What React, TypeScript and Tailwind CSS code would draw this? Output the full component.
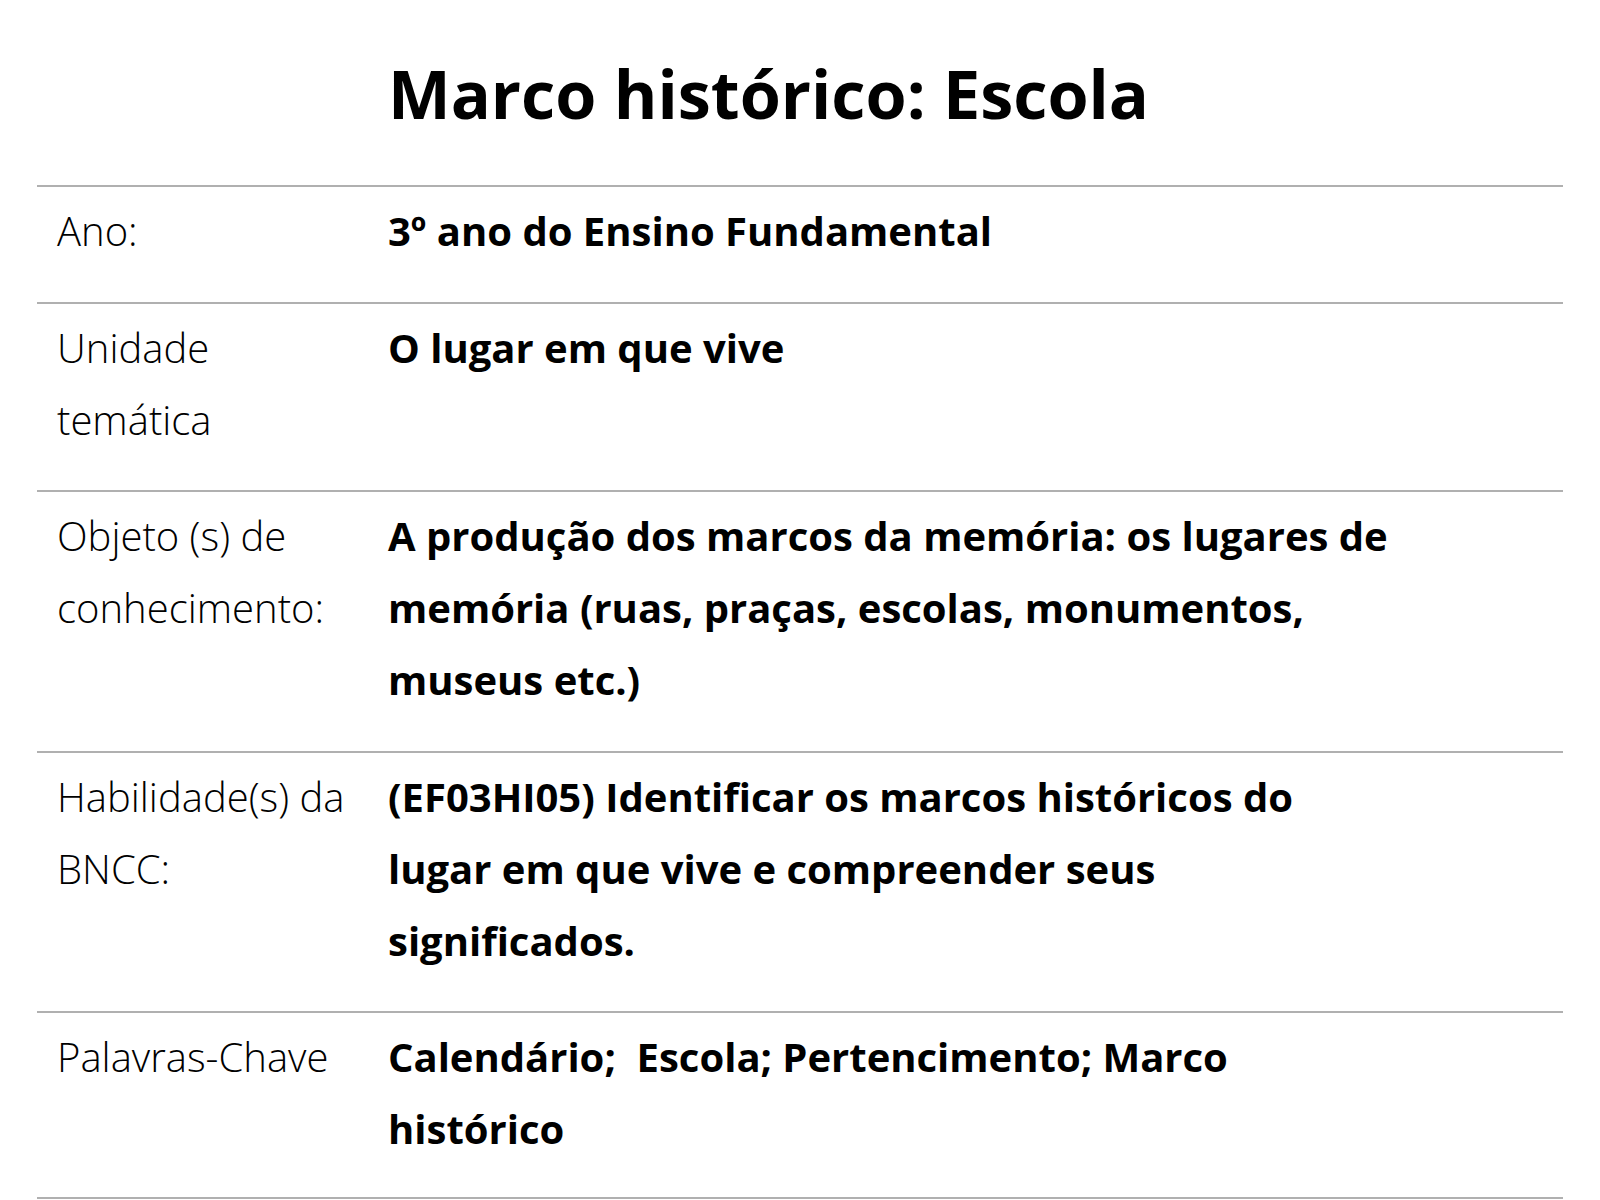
const rows: { label: string; value: string }[] = [
  { label: 'Ano:', value: '3º ano do Ensino Fundamental' },
  { label: 'Unidade temática', value: 'O lugar em que vive' },
  {
    label: 'Objeto (s) de conhecimento:',
    value:
      'A produção dos marcos da memória: os lugares de memória (ruas, praças, escolas, monumentos, museus etc.)',
  },
  {
    label: 'Habilidade(s) da BNCC:',
    value:
      '(EF03HI05) Identificar os marcos históricos do lugar em que vive e compreender seus significados.',
  },
  {
    label: 'Palavras-Chave',
    value: 'Calendário;\u00a0 Escola; Pertencimento; Marco histórico',
  },
];

export default function App() {
  return (
    <div
      className="w-[1600px] h-[1200px] overflow-hidden bg-white text-black px-[37px]"
      style={{ fontFamily: '"Open Sans", "Noto Sans", sans-serif' }}
    >
      {/* Title sits on the value column */}
      <h1 className="pl-[351px] pt-[53px] pb-[52px] text-[66.5px] leading-[80px] font-bold">
        Marco histórico: Escola
      </h1>

      <div className="flex flex-col">
        {rows.map((row, i) => (
          <div
            key={row.label}
            className={`flex border-t-2 border-[#b0b0b0] pt-2 ${
              i === rows.length - 1 ? 'pb-[32px]' : 'pb-[34.5px]'
            }`}
          >
            <div className="w-[351px] shrink-0 pl-5 pr-4 text-[40px] leading-[72px] font-light">
              {row.label}
            </div>
            <div className="w-[1004px] text-[40px] leading-[72px] font-bold">{row.value}</div>
          </div>
        ))}
        <div className="border-t-2 border-[#b0b0b0]" />
      </div>
    </div>
  );
}
